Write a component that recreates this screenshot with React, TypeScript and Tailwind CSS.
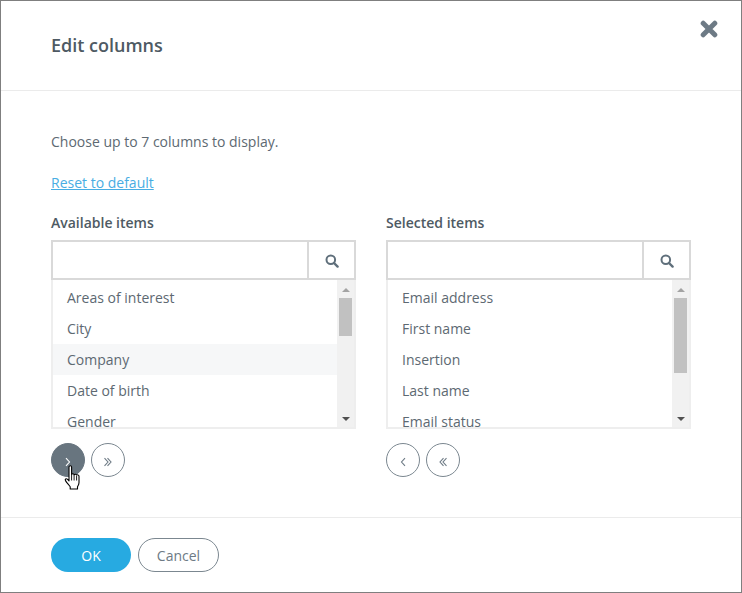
const available = ["Areas of interest", "City", "Company", "Date of birth", "Gender"];
const selected = ["Email address", "First name", "Insertion", "Last name", "Email status"];

function Chevrons({ direction, double }: { direction: "left" | "right"; double?: boolean }) {
  const flip = direction === "left" ? "-scale-x-100" : "";
  return (
    <svg width="10" height="10" viewBox="0 0 10 10" fill="none" stroke="currentColor" strokeWidth="1.1" className={`mt-[3px] ${flip}`}>
      {double ? (
        <>
          <path d="M1.5 1.2 5 5 1.5 8.800" />
          <path d="M4.500 1.200 8 5 4.500 8.800" />
        </>
      ) : (
        <path d="M3 1.200 6.500 5 3 8.800" />
      )}
    </svg>
  );
}

function RoundButton({ direction, double, active }: { direction: "left" | "right"; double?: boolean; active?: boolean }) {
  return (
    <button
      type="button"
      className={`flex h-[34px] w-[34px] items-center justify-center rounded-full border ${
        active ? "border-[#68757f] bg-[#68757f] text-white" : "border-[#7b8790] bg-white text-[#6d7a85]"
      }`}
    >
      <Chevrons direction={direction} double={double} />
    </button>
  );
}

function SearchIcon() {
  return (
    <svg width="14" height="14" viewBox="0 0 14 14" fill="none" stroke="currentColor" className="mt-[2px]">
      <circle cx="5.800" cy="5.800" r="4.300" strokeWidth="2" />
      <path d="M9 9 12.600 12.600" strokeWidth="2.400" strokeLinecap="round" />
    </svg>
  );
}

function ListBox({
  title,
  items,
  highlight,
  thumbHeight,
}: {
  title: string;
  items: string[];
  highlight?: string;
  thumbHeight: string;
}) {
  return (
    <div className="w-[305px]">
      <h3 className="text-[14px] leading-[20px] font-semibold text-[#4e5a63]">{title}</h3>
      <div className="mt-[7px] flex h-[40px] border-2 border-[#d9d9d9]">
        <div className="flex-1 border-r-2 border-[#d9d9d9]" />
        <div className="flex w-[45px] items-center justify-center text-[#5f6f7b]">
          <SearchIcon />
        </div>
      </div>
      <div className="flex h-[149px] overflow-hidden border-x-2 border-b-2 border-[#eeeeee]">
        <ul className="flex-1 overflow-hidden pt-[2px]">
          {items.map((item) => (
            <li
              key={item}
              className={`h-[31px] pl-[14px] text-[14px] leading-[31px] text-[#5d6972] ${
                item === highlight ? "bg-[#f6f7f8]" : "bg-white"
              }`}
            >
              {item}
            </li>
          ))}
        </ul>
        <div className="flex w-[17px] flex-col items-center bg-[#f1f1f1]">
          <div className="mt-[8px] h-0 w-0 border-x-[4px] border-b-[4px] border-x-transparent border-b-[#a3a3a3]" />
          <div className={`mt-[6px] w-[13px] bg-[#c1c1c1] ${thumbHeight}`} />
          <div className="mt-auto mb-[6px] h-0 w-0 border-x-[4px] border-t-[4px] border-x-transparent border-t-[#505050]" />
        </div>
      </div>
    </div>
  );
}

function HandCursor() {
  return (
    <svg width="18" height="25" viewBox="0 0 18 25" className="pointer-events-none absolute top-[22px] left-[13px]">
      <path
        d="M5 2c0-1.700 2.600-1.700 2.600 0v7.500c.6-1 2.300-.9 2.500.3.6-.9 2.300-.8 2.500.4.7-.7 2.400-.4 2.400 1v6.300c0 2-.9 3.200-1.500 4.300v2.200H6.200v-2.200c-1.400-2-3.300-3.800-4.700-6.200-.8-1.300.6-2.500 1.800-1.400L5 15.800z"
        fill="white"
        stroke="black"
        strokeWidth="1.100"
        strokeLinejoin="round"
      />
      <path d="M7.600 10v5.500M10.100 10v5.500M12.600 11v4.500" stroke="black" strokeWidth="0.900" fill="none" />
    </svg>
  );
}

export default function App() {
  return (
    <div className="flex h-[593px] w-[742px] flex-col border border-[#7f7f7f] bg-white font-['Open_Sans',sans-serif] text-[#5d6972]">
      <header className="relative flex h-[90px] shrink-0 items-center border-b border-[#ebebeb] pl-[50px]">
        <h2 className="text-[18px] font-semibold text-[#4e5a63]">Edit columns</h2>
        <svg width="18" height="18" viewBox="0 0 18 18" className="absolute top-[19px] right-[23px] text-[#6d7a85]">
          <path d="M3.200 3.200 14.800 14.800M14.800 3.200 3.200 14.800" stroke="currentColor" strokeWidth="5" strokeLinecap="round" />
        </svg>
      </header>

      <main className="flex-1 pl-[50px]">
        <p className="mt-[41px] text-[14px] leading-[20px]">Choose up to 7 columns to display.</p>
        <a href="#" className="mt-[21px] block w-fit text-[14px] leading-[20px] text-[#48ade3] underline">
          Reset to default
        </a>
        <div className="mt-[20px] flex gap-[30px]">
          <div>
            <ListBox title="Available items" items={available} highlight="Company" thumbHeight="h-[38px]" />
            <div className="relative mt-[14px] flex gap-[6px]">
              <RoundButton direction="right" active />
              <RoundButton direction="right" double />
              <HandCursor />
            </div>
          </div>
          <div>
            <ListBox title="Selected items" items={selected} thumbHeight="h-[75px]" />
            <div className="mt-[14px] flex gap-[6px]">
              <RoundButton direction="left" />
              <RoundButton direction="left" double />
            </div>
          </div>
        </div>
      </main>

      <footer className="flex h-[75px] shrink-0 items-start gap-[7px] border-t border-[#ebebeb] pt-[20px] pl-[50px]">
        <button type="button" className="h-[34px] w-[80px] rounded-full bg-[#27aae1] text-[14px] text-white">
          OK
        </button>
        <button type="button" className="h-[34px] w-[81px] rounded-full border border-[#7b8790] bg-white text-[14px] text-[#6d7a85]">
          Cancel
        </button>
      </footer>
    </div>
  );
}
